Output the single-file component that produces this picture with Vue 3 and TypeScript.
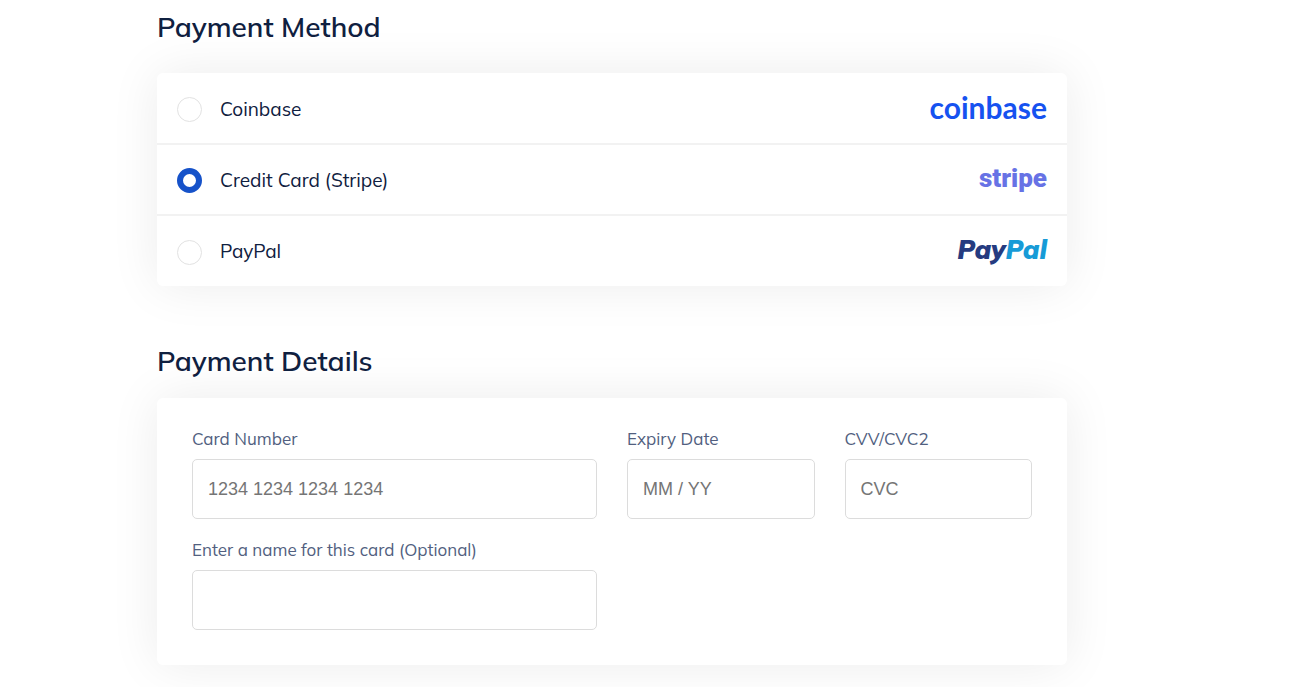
<script setup lang="ts">
import { ref } from 'vue'

interface Method {
  id: string
  label: string
}

interface Field {
  id: string
  label: string
  placeholder: string
  wide: boolean
}

const methods: Method[] = [
  { id: 'coinbase', label: 'Coinbase' },
  { id: 'stripe', label: 'Credit Card (Stripe)' },
  { id: 'paypal', label: 'PayPal' },
]

const fields: Field[] = [
  { id: 'card-number', label: 'Card Number', placeholder: '1234 1234 1234 1234', wide: true },
  { id: 'expiry', label: 'Expiry Date', placeholder: 'MM / YY', wide: false },
  { id: 'cvc', label: 'CVV/CVC2', placeholder: 'CVC', wide: false },
  { id: 'card-name', label: 'Enter a name for this card (Optional)', placeholder: '', wide: true },
]

const selected = ref<string>('stripe')
const values = ref<Record<string, string>>({})
</script>

<template>
  <main class="page">
    <section>
      <h2 class="title">Payment Method</h2>
      <div class="card methods" role="radiogroup" aria-label="Payment Method">
        <label v-for="m in methods" :key="m.id" class="method" :for="m.id">
          <input :id="m.id" v-model="selected" class="radio" type="radio" name="method" :value="m.id" />
          <span class="method-name">{{ m.label }}</span>
          <span v-if="m.id === 'coinbase'" class="logo coinbase">coinbase</span>
          <span v-else-if="m.id === 'stripe'" class="logo stripe">stripe</span>
          <span v-else class="logo paypal">Pay<span class="pal">Pal</span></span>
        </label>
      </div>
    </section>

    <section class="details">
      <h2 class="title">Payment Details</h2>
      <form class="card form" @submit.prevent>
        <div v-for="f in fields" :key="f.id" class="field" :class="{ wide: f.wide }">
          <label class="field-label" :for="f.id">{{ f.label }}</label>
          <input :id="f.id" v-model="values[f.id]" class="text" type="text" :placeholder="f.placeholder" />
        </div>
      </form>
    </section>
  </main>
</template>

<style>
body {
  margin: 0;
  background: #fff;
}
</style>

<style scoped>
.page {
  padding: 7px 235px 22px 157px;
  font-family: Mulish, Muli, Lato, sans-serif;
  color: #0f2040;
}

.title {
  margin: 0;
  font-size: 28px;
  line-height: 40px;
  font-weight: 600;
}

.card {
  background: #fff;
  border-radius: 6px;
  box-shadow: 0 0 50px rgba(0, 0, 0, 0.08);
}

.methods {
  margin-top: 26px;
  padding-top: 1px;
}

.method {
  display: flex;
  align-items: center;
  box-sizing: border-box;
  height: 71px;
  padding: 2px 20px 0;
  border-bottom: 2px solid #f2f2f2;
  cursor: pointer;
}

.method:last-child {
  height: 70px;
  border-bottom: 0;
}

.radio {
  appearance: none;
  box-sizing: border-box;
  flex: none;
  width: 25px;
  height: 25px;
  margin: 0 18px 0 0;
  border: 1px solid #e2e2e2;
  border-radius: 50%;
  background: #fff;
}

.radio:checked {
  border: 6px solid #1652c9;
}

.method-name {
  padding-bottom: 2px;
  font-size: 19px;
  line-height: 28px;
}

.logo {
  margin-left: auto;
  padding-bottom: 5px;
}

.coinbase {
  color: #1652f0;
  font: 700 30px/40px Lato, sans-serif;
}

.stripe {
  color: #6772e5;
  font: 900 26px/40px Roboto, sans-serif;
}

.paypal {
  color: #253b80;
  font: italic 900 26px/40px Mulish, Muli, Lato, sans-serif;
}

.pal {
  color: #179bd7;
}

.details {
  margin-top: 55px;
}

.form {
  display: grid;
  grid-template-columns: repeat(4, minmax(0, 1fr));
  gap: 18px 30px;
  margin-top: 17px;
  padding: 28px 35px 35px;
}

.field {
  display: flex;
  flex-direction: column;
  gap: 7px;
}

.wide {
  grid-column: span 2;
}

.field-label {
  color: #525f7f;
  font-size: 17px;
  line-height: 26px;
}

.text {
  box-sizing: border-box;
  width: 100%;
  height: 60px;
  padding: 0 15px;
  border: 1px solid #dcdcdc;
  border-radius: 5px;
  background: #fff;
  color: #0f2040;
  font: 18px "Liberation Sans", Arial, sans-serif;
}

.text::placeholder {
  color: #757575;
  opacity: 1;
}
</style>
